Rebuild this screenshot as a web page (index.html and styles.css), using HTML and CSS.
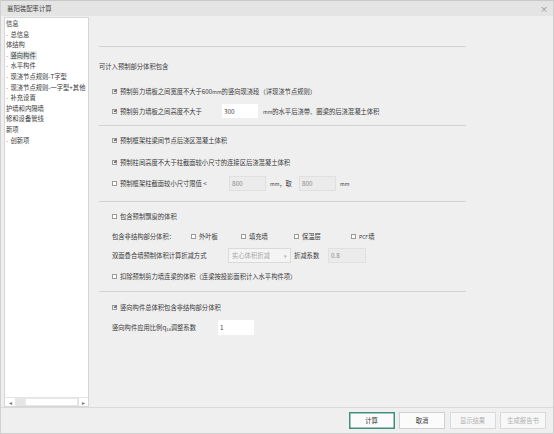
FILE: index.html
```html
<!DOCTYPE html>
<html lang="zh">
<head>
<meta charset="utf-8">
<title>襄阳装配率计算</title>
<link rel="stylesheet" href="styles.css">
</head>
<body>
<div class="window">
  <div class="titlebar">
    <span class="title">襄阳装配率计算</span>
    <span class="close">×</span>
  </div>
  <div class="body">
    <div class="sidebar">
      <ul class="tree">
        <li class="lvl0">信息</li>
        <li class="lvl1"><span class="dash">-</span>总信息</li>
        <li class="lvl0">体结构</li>
        <li class="lvl1"><span class="dash">-</span><span class="sel">竖向构件</span></li>
        <li class="lvl1"><span class="dash">-</span>水平构件</li>
        <li class="lvl1"><span class="dash">-</span>现浇节点规则-T字型</li>
        <li class="lvl1"><span class="dash">-</span>现浇节点规则-一字型+其他</li>
        <li class="lvl1"><span class="dash">-</span>补充设置</li>
        <li class="lvl0">护墙和内隔墙</li>
        <li class="lvl0">修和设备管线</li>
        <li class="lvl0">新项</li>
        <li class="lvl1"><span class="dash">-</span>创新项</li>
      </ul>
      <div class="hscroll">
        <span class="arrow">&#9666;</span>
        <span class="thumb"></span>
        <span class="track"></span>
        <span class="arrow right">&#9656;</span>
      </div>
    </div>
    <div class="content">
      <div class="sep first"></div>
      <div class="heading">可计入预制部分体积包含</div>
      <div class="row r1"><span class="cb on"></span>预制剪力墙板之间宽度不大于600<small>mm</small>的竖向现浇段（详现浇节点规则）</div>
      <div class="row r2"><span class="cb on"></span><span class="lab w1">预制剪力墙板之间高度不大于</span><span class="inp">300</span><span class="after"><small>mm</small>的水平后浇带、圈梁的后浇混凝土体积</span></div>
      <div class="sep s2"></div>
      <div class="row r3"><span class="cb on"></span>预制框架柱梁间节点后浇区混凝土体积</div>
      <div class="row r4"><span class="cb on"></span>预制柱间高度不大于柱截面较小尺寸的连接区后浇混凝土体积</div>
      <div class="row r5"><span class="cb"></span><span class="lab w2">预制框架柱截面较小尺寸限值 &lt;</span><span class="inp dis">800</span><span class="unit"><small>mm</small>，取</span><span class="inp dis">800</span><span class="unit"><small>mm</small></span></div>
      <div class="sep s3"></div>
      <div class="row r6"><span class="cb"></span>包含预制飘窗的体积</div>
      <div class="row r7"><span class="lab w3">包含非结构部分体积：</span><span class="opt o1"><span class="cb"></span>外叶板</span><span class="opt o2"><span class="cb"></span>填充墙</span><span class="opt o3"><span class="cb"></span>保温层</span><span class="opt"><span class="cb"></span><small>PCF</small>墙</span></div>
      <div class="row r8"><span class="lab w4">双面叠合墙预制体积计算折减方式</span><span class="select"><span>实心体积折减</span><span class="caret">&#9662;</span></span><span class="lab w5">折减系数</span><span class="inp dis wide">0.8</span></div>
      <div class="row r9"><span class="cb"></span>扣除预制剪力墙连梁的体积（连梁按投影面积计入水平构件项）</div>
      <div class="sep s4"></div>
      <div class="row r10"><span class="cb on"></span>竖向构件总体积包含非结构部分体积</div>
      <div class="row r11"><span class="lab w6">竖向构件应用比例q<sub>1a</sub>调整系数</span><span class="inp">1</span></div>
    </div>
  </div>
  <div class="footer">
    <button class="btn primary">计算</button>
    <button class="btn">取消</button>
    <button class="btn" disabled>显示结果</button>
    <button class="btn" disabled>生成报告书</button>
  </div>
</div>
</body>
</html>
```

FILE: styles.css
```css
* { box-sizing: border-box; }
html, body { margin: 0; padding: 0; background: #efefef; }
body {
  font-family: "Noto Sans CJK SC", "Noto Sans", sans-serif;
  font-size: 6.3px;
  color: #3a3a3a;
}
small { font-size: 5px; }
.window {
  width: 554px;
  height: 434px;
  display: flex;
  flex-direction: column;
  background: #efefef;
  border: 1px solid #d0d0d0;
  border-top-color: #c8c8c8;
}
.titlebar {
  height: 15px;
  flex: none;
  background: #e4e4e4;
  display: flex;
  align-items: center;
  justify-content: space-between;
  padding: 0 5px 0 6px;
}
.title { font-size: 6.4px; color: #444; }
.close { font-size: 8px; color: #888; line-height: 1; }
.body {
  flex: 1;
  display: flex;
  min-height: 0;
}
.sidebar {
  width: 85px;
  margin: 1px 0 0 3px;
  background: #fff;
  border: 1px solid #d6d6d6;
  display: flex;
  flex-direction: column;
}
.tree {
  list-style: none;
  margin: 0;
  padding: 1px 0 0 0;
  flex: 1;
  overflow: hidden;
}
.tree li {
  height: 10.6px;
  line-height: 10.6px;
  white-space: nowrap;
  color: #3a3a3a;
}
.tree .lvl0 { padding-left: 1px; }
.tree .lvl1 { padding-left: 1px; }
.dash { display: inline-block; width: 4.5px; color: #888; }
.sel { background: #e3ebea; padding: 0 1px; margin-left: -1px; }
.hscroll {
  height: 9px;
  flex: none;
  display: flex;
  align-items: stretch;
  border-top: 1px solid #e4e4e4;
  background: #fff;
}
.hscroll .arrow {
  width: 10px;
  font-size: 6px;
  color: #777;
  display: flex;
  align-items: center;
  justify-content: center;
}
.hscroll .right { border-left: 1px solid #e0e0e0; }
.hscroll .thumb { width: 10px; background: #e6e6e6; }
.hscroll .track { flex: 1; background: #fff; border: 1px solid #e8e8e8; }
.content {
  flex: 1;
  padding: 30px 0 0 10px;
}
.sep {
  width: 367px;
  height: 1px;
  background: #d2d2d2;
}
.sep.s2 { margin-top: 7px; }
.sep.s3 { margin-top: 10px; }
.sep.s4 { margin-top: 8px; }
.heading {
  height: 14px;
  display: flex;
  align-items: center;
  margin-top: 12px;
}
.row {
  height: 14px;
  display: flex;
  align-items: center;
  padding-left: 13px;
  white-space: nowrap;
}
.r1 { margin-top: 11px; }
.r2 { margin-top: 6px; }
.r3 { margin-top: 7px; }
.r4 { margin-top: 8px; }
.r5 { margin-top: 7px; height: 15px; }
.r6 { margin-top: 7px; }
.r7 { margin-top: 6px; }
.r8 { margin-top: 5px; height: 15px; }
.r9 { margin-top: 6px; }
.r10 { margin-top: 8px; }
.r11 { margin-top: 6px; height: 15px; }
.cb {
  width: 5px;
  height: 5px;
  border: 1px solid #9a9a9a;
  background: #fff;
  margin-right: 3px;
  flex: none;
  position: relative;
}
.cb.on::after {
  content: "";
  position: absolute;
  left: 0.8px;
  top: -0.2px;
  width: 1.4px;
  height: 2.4px;
  border: solid #555;
  border-width: 0 0.8px 0.8px 0;
  transform: rotate(40deg);
}
.lab { display: inline-block; }
.w1 { width: 102px; }
.w2 { width: 109px; }
.w3 { width: 79px; }
.w4 { width: 116px; }
.w5 { width: 34px; }
.w6 { width: 106px; }
.inp {
  width: 36px;
  height: 14px;
  background: #fff;
  display: flex;
  align-items: center;
  padding-left: 2px;
  color: #444;
  flex: none;
}
.r5 .inp, .r8 .inp, .r11 .inp { height: 15px; }
.inp.dis {
  background: #ebebeb;
  border: 1px solid #e0e0e0;
  color: #8a8a8a;
  width: 37px;
}
.inp.wide { width: 38px; }
.after { margin-left: 5px; }
.unit { margin-left: 4px; width: 29px; }
.opt { display: flex; align-items: center; }
.o1 { width: 50px; }
.o2 { width: 53px; }
.o3 { width: 57px; }
.select {
  width: 63px;
  height: 15px;
  background: #f4f4f4;
  border: 1px solid #dadada;
  display: flex;
  align-items: center;
  justify-content: space-between;
  padding: 0 3px 0 3px;
  color: #a8a8a8;
  margin-right: 3px;
}
.caret { font-size: 5px; color: #aaa; }
sub { font-size: 4px; vertical-align: -1px; line-height: 0; }
.footer {
  height: 26px;
  flex: none;
  border-top: 1px solid #dadada;
  display: flex;
  justify-content: flex-end;
  align-items: center;
  gap: 4.5px;
  padding: 0 7px 0 0;
}
.btn {
  width: 46px;
  height: 17px;
  font-family: inherit;
  font-size: 6.3px;
  color: #333;
  background: #fbfbfb;
  border: 1px solid #cfcfcf;
  padding: 0;
  margin: 0;
}
.btn.primary { border: 1px solid #3f8f7e; box-shadow: inset 0 0 0 0.5px #3f8f7e; }
.btn:disabled { color: #b0b0b0; border-color: #dadada; background: #f7f7f7; }
```
